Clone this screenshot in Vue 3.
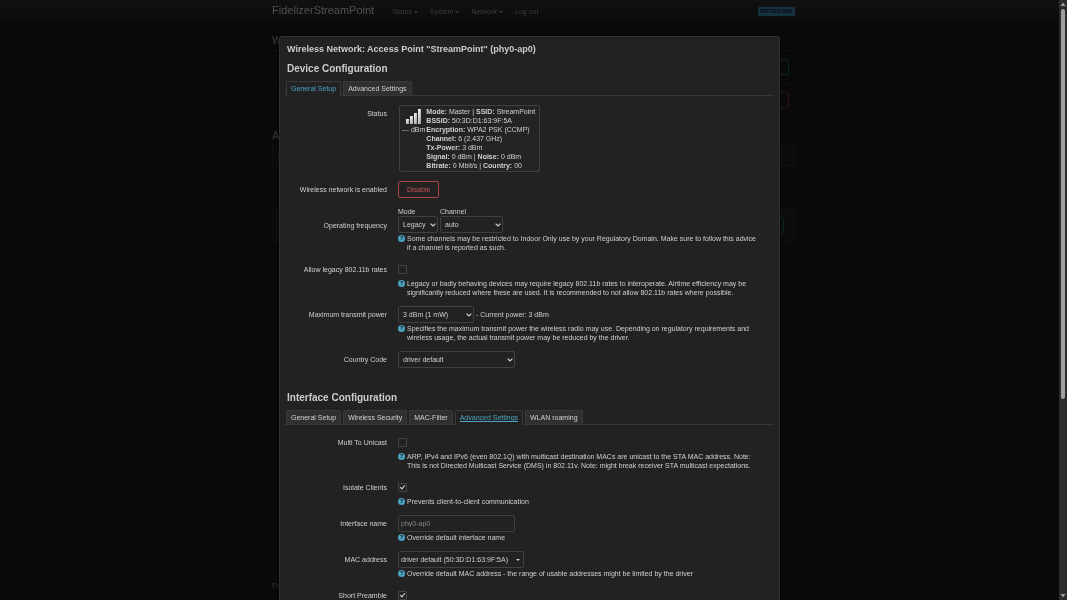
<script setup>
import { ref, reactive } from "vue";

const menu = [
    { name: 'Status', sub: true },
    { name: 'System', sub: true },
    { name: 'Network', sub: true },
    { name: 'Log out', sub: false }
];

const deviceTabs = ['General Setup', 'Advanced Settings'];
const ifaceTabs = ['General Setup', 'Wireless Security', 'MAC-Filter', 'Advanced Settings', 'WLAN roaming'];
const deviceTab = ref('General Setup');
const ifaceTab = ref('Advanced Settings');

const info = [
    [['Mode:', 'Master'], ['SSID:', 'StreamPoint']],
    [['BSSID:', '50:3D:D1:63:9F:5A']],
    [['Encryption:', 'WPA2 PSK (CCMP)']],
    [['Channel:', '6 (2.437 GHz)']],
    [['Tx-Power:', '3 dBm']],
    [['Signal:', '0 dBm'], ['Noise:', '0 dBm']],
    [['Bitrate:', '0 Mbit/s'], ['Country:', '00']]
];

const form = reactive({
    mode: 'Legacy',
    channel: 'auto',
    legacyRates: false,
    txpower: '3 dBm (1 mW)',
    country: 'driver default',
    multicast: false,
    isolate: true,
    ifname: '',
    mac: 'driver default (50:3D:D1:63:9F:5A)',
    preamble: true
});
</script>

<template>
    <div class="page">
        <header>
            <div class="container navbar">
                <a class="brand" href="#">FidelizerStreamPoint</a>
                <nav>
                    <a v-for="item in menu" :key="item.name" href="#">{{ item.name }}<i v-if="item.sub" class="caret"></i></a>
                </nav>
                <span class="indicator">REFRESHING</span>
            </div>
        </header>
        <main class="container">
            <h2>Wireless Overview</h2>
            <div class="line"><button class="green" aria-label="Scan"></button></div>
            <div class="line"><button class="red" aria-label="Remove"></button></div>
            <h2 class="stations">Associated Stations</h2>
            <div class="strip">Network</div>
            <div class="actions"><button class="green" aria-label="Save"></button></div>
        </main>
        <footer class="container">Powered by LuCI</footer>
    </div>

    <div class="overlay">
        <div class="scroller">
            <div class="modal" role="dialog">
                <h4>Wireless Network: Access Point "StreamPoint" (phy0-ap0)</h4>

                <h3>Device Configuration</h3>
                <ul class="tabs">
                    <li v-for="tab in deviceTabs" :key="tab" :class="{ active: tab === deviceTab }">
                        <a href="#" @click.prevent="deviceTab = tab">{{ tab }}</a>
                    </li>
                </ul>
                <section class="device">
                    <div class="row">
                        <span class="title">Status</span>
                        <div class="field">
                            <div class="badge">
                                <div class="signal">
                                    <svg viewBox="0 0 16 16" width="16" height="16">
                                        <defs>
                                            <linearGradient id="bar" x1="0" y1="0" x2="1" y2="1">
                                                <stop offset="0" stop-color="#fff" />
                                                <stop offset="1" stop-color="#999" />
                                            </linearGradient>
                                        </defs>
                                        <rect x="1" y="10" width="3" height="5" fill="url(#bar)" />
                                        <rect x="5" y="7" width="3" height="8" fill="url(#bar)" />
                                        <rect x="9" y="4" width="3" height="11" fill="url(#bar)" />
                                        <rect x="13" y="0" width="3" height="15" fill="url(#bar)" />
                                    </svg>
                                    <span>--- dBm</span>
                                </div>
                                <div>
                                    <div v-for="(line, n) in info" :key="n">
                                        <template v-for="(pair, k) in line" :key="k"><template v-if="k"> | </template><b>{{ pair[0] }}</b> {{ pair[1] }}</template>
                                    </div>
                                </div>
                            </div>
                        </div>
                    </div>
                    <div class="row">
                        <span class="title">Wireless network is enabled</span>
                        <div class="field"><button class="disable">Disable</button></div>
                    </div>
                    <div class="row frequency">
                        <span class="title">Operating frequency</span>
                        <div class="field">
                            <div class="bands">
                                <div>
                                    <label for="mode">Mode</label>
                                    <span class="select mode">
                                        <select id="mode" v-model="form.mode"><option>Legacy</option><option>N</option></select>
                                        <svg viewBox="0 0 6 4"><path d="M.6 .6L3 3L5.4 .6" /></svg>
                                    </span>
                                </div>
                                <div>
                                    <label for="channel">Channel</label>
                                    <span class="select channel">
                                        <select id="channel" v-model="form.channel"><option>auto</option></select>
                                        <svg viewBox="0 0 6 4"><path d="M.6 .6L3 3L5.4 .6" /></svg>
                                    </span>
                                </div>
                            </div>
                            <p class="help">Some channels may be restricted to Indoor Only use by your Regulatory Domain. Make sure to follow this advice if a channel is reported as such.</p>
                        </div>
                    </div>
                    <div class="row">
                        <label class="title" for="rates">Allow legacy 802.11b rates</label>
                        <div class="field">
                            <div class="control"><input id="rates" type="checkbox" v-model="form.legacyRates"></div>
                            <p class="help">Legacy or badly behaving devices may require legacy 802.11b rates to interoperate. Airtime efficiency may be significantly reduced where these are used. It is recommended to not allow 802.11b rates where possible.</p>
                        </div>
                    </div>
                    <div class="row">
                        <label class="title" for="txpower">Maximum transmit power</label>
                        <div class="field">
                            <div class="control">
                                <span class="select power">
                                    <select id="txpower" v-model="form.txpower"><option>3 dBm (1 mW)</option></select>
                                    <svg viewBox="0 0 6 4"><path d="M.6 .6L3 3L5.4 .6" /></svg>
                                </span>
                                <span>- Current power: 3 dBm</span>
                            </div>
                            <p class="help">Specifies the maximum transmit power the wireless radio may use. Depending on regulatory requirements and wireless usage, the actual transmit power may be reduced by the driver.</p>
                        </div>
                    </div>
                    <div class="row">
                        <label class="title" for="country">Country Code</label>
                        <div class="field">
                            <span class="select wide">
                                <select id="country" v-model="form.country"><option>driver default</option></select>
                                <svg viewBox="0 0 6 4"><path d="M.6 .6L3 3L5.4 .6" /></svg>
                            </span>
                        </div>
                    </div>
                </section>

                <h3>Interface Configuration</h3>
                <ul class="tabs">
                    <li v-for="tab in ifaceTabs" :key="tab" :class="{ active: tab === ifaceTab, focused: tab === ifaceTab }">
                        <a href="#" @click.prevent="ifaceTab = tab">{{ tab }}</a>
                    </li>
                </ul>
                <section>
                    <div class="row">
                        <label class="title" for="multicast">Multi To Unicast</label>
                        <div class="field">
                            <div class="control"><input id="multicast" type="checkbox" v-model="form.multicast"></div>
                            <p class="help">ARP, IPv4 and IPv6 (even 802.1Q) with multicast destination MACs are unicast to the STA MAC address. Note: This is not Directed Multicast Service (DMS) in 802.11v. Note: might break receiver STA multicast expectations.</p>
                        </div>
                    </div>
                    <div class="row">
                        <label class="title" for="isolate">Isolate Clients</label>
                        <div class="field">
                            <div class="control"><input id="isolate" type="checkbox" v-model="form.isolate"></div>
                            <p class="help">Prevents client-to-client communication</p>
                        </div>
                    </div>
                    <div class="row">
                        <label class="title" for="ifname">Interface name</label>
                        <div class="field">
                            <input id="ifname" class="wide" type="text" placeholder="phy0-ap0" v-model="form.ifname">
                            <p class="help">Override default interface name</p>
                        </div>
                    </div>
                    <div class="row">
                        <label class="title" for="mac">MAC address</label>
                        <div class="field">
                            <span class="select mac">
                                <select id="mac" v-model="form.mac"><option>driver default (50:3D:D1:63:9F:5A)</option></select>
                                <i class="caret"></i>
                            </span>
                            <p class="help">Override default MAC address - the range of usable addresses might be limited by the driver</p>
                        </div>
                    </div>
                    <div class="row">
                        <label class="title" for="preamble">Short Preamble</label>
                        <div class="field">
                            <div class="control"><input id="preamble" type="checkbox" v-model="form.preamble"></div>
                        </div>
                    </div>
                </section>
            </div>
        </div>
        <div class="scrollbar">
            <svg viewBox="0 0 8 8"><path d="M4 2L6.5 5.5H1.5z" /></svg>
            <div class="track"><div class="thumb"></div></div>
            <svg viewBox="0 0 8 8"><path d="M4 6L1.5 2.5H6.5z" /></svg>
        </div>
    </div>
</template>

<style>
body {
    background: #090909;
}
</style>

<style scoped>
.page, .overlay {
    font: 7px/9px "Liberation Sans", Arial, sans-serif;
    color: #d0d0d0;
}

a {
    color: inherit;
    text-decoration: none;
}

h2, h3, h4, p, ul {
    margin: 0;
    padding: 0;
}

button, input, select {
    font: inherit;
    color: inherit;
    box-sizing: border-box;
    margin: 0;
}

/* page behind the dialog */
.page {
    height: 100vh;
    overflow: hidden;
    display: flex;
    flex-direction: column;
    color: #303030;
    will-change: transform;
}

.container {
    width: 49%;
    margin: 0 auto;
}

header {
    background: linear-gradient(#111, #0b0b0b);
}

.navbar {
    display: flex;
    align-items: center;
    height: 22px;
}

.brand {
    font-size: 11px;
    line-height: 20px;
    color: #525252;
    margin-right: 18px;
    padding-bottom: 2px;
}

nav {
    display: flex;
    gap: 12px;
    flex: 1;
    color: #3c3c3c;
}

.caret {
    display: inline-block;
    border: 2px solid transparent;
    border-top-color: currentColor;
    border-bottom: 0;
    margin-left: 2px;
    vertical-align: middle;
}

.indicator {
    background: #16323e;
    color: #080c0e;
    border-radius: 1px;
    padding: 0 2px;
    font-size: 5px;
    font-weight: bold;
}

main {
    flex: 1;
}

h2 {
    font-size: 10px;
    line-height: 18px;
    margin-top: 10px;
}

.line {
    display: flex;
    justify-content: flex-end;
    border-top: 1px solid #101010;
    padding: 8px 6px;
}

.line button, .actions button {
    width: 40px;
    height: 16px;
    background: none;
    border: 1px solid #06271c;
    border-radius: 2px;
}

.line .red {
    border-color: #300f10;
}

.stations {
    margin-top: 11px;
}

.strip {
    border: 1px solid #101010;
    background: #0b0b0b;
    padding: 5px;
    margin-bottom: 42px;
}

.actions {
    display: flex;
    justify-content: flex-end;
    background: #0c0c0c;
    border-top: 1px solid #101010;
    padding: 9px 11px;
}

footer {
    padding-bottom: 10px;
}

/* dialog */
.overlay {
    position: fixed;
    inset: 0;
    display: flex;
}

.scroller {
    flex: 1;
    overflow: hidden;
    padding-top: 36px;
}

.modal {
    box-sizing: border-box;
    width: 47%;
    min-width: 501px;
    margin: 0 auto;
    padding: 5px 5px 20px;
    background: #222;
    border: 1px solid #303030;
    border-radius: 2px;
    box-shadow: 0 0 2px #000;
}

h4, h3 {
    padding-left: 2px;
    color: #ccc;
}

h4 {
    font-size: 9px;
    line-height: 14px;
}

h3 {
    font-size: 10px;
    line-height: 18px;
    margin: 4px 0 3px;
}

.tabs {
    list-style: none;
    display: flex;
    gap: 2px;
    padding-left: 1px;
    border-bottom: 1px solid #383838;
}

.tabs li {
    border: 1px solid #3a3a3a;
    border-bottom: 0;
    border-radius: 2px 2px 0 0;
    background: #303030;
    padding: 2px 4px;
}

.tabs .active {
    background: #222;
    color: #4ba3c3;
    margin-bottom: -1px;
}

.tabs .focused a {
    text-decoration: underline;
}

section {
    display: flex;
    flex-direction: column;
    gap: 9px;
    padding-top: 9px;
}

.device {
    padding-bottom: 17px;
}

.row {
    display: flex;
    gap: 11px;
}

.title {
    width: 102px;
    flex: none;
    text-align: right;
    padding-top: 4px;
}

.frequency .title {
    padding-top: 14px;
}

.field {
    flex: 1;
}

.badge {
    display: inline-flex;
    gap: 1px;
    border: 1px solid #404040;
    border-radius: 2px;
    background: #242424;
    padding: 1px 4px 1px 2px;
    margin: 0 1px;
    vertical-align: top;
}

.signal {
    display: flex;
    flex-direction: column;
    align-items: flex-end;
    padding-top: 2px;
}

.signal svg {
    margin-right: 4px;
}

.disable {
    height: 17px;
    padding: 0 8px;
    background: none;
    color: #c44f4f;
    border: 1px solid #a94444;
    border-radius: 2px;
    vertical-align: top;
}

.bands {
    display: flex;
    gap: 2px;
}

.bands label {
    display: block;
}

.control {
    display: flex;
    align-items: center;
    gap: 2px;
    height: 17px;
}

.select {
    position: relative;
    display: inline-block;
    vertical-align: top;
}

.select select {
    appearance: none;
    display: block;
    width: 100%;
    height: 17px;
    padding: 0 4px;
    background: #222;
    border: 1px solid #404040;
    border-radius: 2px;
}

.select svg {
    position: absolute;
    right: 2px;
    top: 7px;
    width: 6px;
    height: 4px;
    fill: none;
    stroke: #d0d0d0;
    stroke-width: 1.2;
    pointer-events: none;
}

.mode {
    width: 40px;
}

.channel {
    width: 63px;
}

.power {
    width: 76px;
}

.wide {
    width: 117px;
}

.mac {
    width: 126px;
}

.mac select {
    padding: 0 2px;
}

.mac .caret {
    position: absolute;
    right: 4px;
    top: 8px;
    pointer-events: none;
}

input[type="text"] {
    display: block;
    height: 17px;
    padding: 0 2px;
    background: #222;
    border: 1px solid #404040;
    border-radius: 2px;
}

input::placeholder {
    color: #888;
}

input[type="checkbox"] {
    appearance: none;
    display: flex;
    justify-content: center;
    width: 9px;
    height: 9px;
    border: 1px solid #444;
    border-radius: 1px;
}

input[type="checkbox"]:checked::after {
    content: "";
    width: 2px;
    height: 4px;
    border: solid #d8d8d8;
    border-width: 0 1px 1px 0;
    transform: rotate(40deg);
}

.help {
    position: relative;
    margin-top: 1px;
    padding: 0 15px 0 9px;
}

.help::before {
    content: "?";
    position: absolute;
    left: 0;
    top: 1px;
    width: 7px;
    height: 7px;
    border-radius: 50%;
    background: #4ba3c3;
    color: #222;
    font-size: 6px;
    font-weight: bold;
    line-height: 7px;
    text-align: center;
}

.scrollbar {
    width: 8px;
    background: #2c2c2c;
    display: flex;
    flex-direction: column;
}

.scrollbar svg {
    width: 8px;
    height: 9px;
    fill: #9f9f9f;
}

.track {
    flex: 1;
}

.thumb {
    height: 67%;
    margin: 0 2px;
    border-radius: 2px;
    background: #9f9f9f;
}
</style>
